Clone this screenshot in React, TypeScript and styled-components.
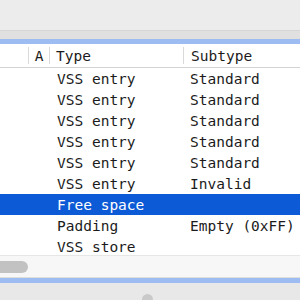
import React from "react";
import styled, { createGlobalStyle } from "styled-components";

const Global = createGlobalStyle`
  html, body { margin: 0; padding: 0; background: #ececec; }
  body { width: 300px; height: 300px; overflow: hidden; }
`;

const Window = styled.div`
  width: 300px;
  height: 300px;
  display: flex;
  flex-direction: column;
  background: #ececec;
  overflow: hidden;
  font-family: "DejaVu Sans Mono", "Liberation Mono", monospace;
  font-size: 14.5px;
  color: #1b1b1b;
`;

const Toolbar = styled.div`
  height: 30px;
  flex: none;
  background: #ececec;
  border-bottom: 1px solid #d6d6d6;
`;

const Gap = styled.div`
  height: 8px;
  flex: none;
  background: #e0e0e0;
`;

const ScrollView = styled.div`
  flex: none;
  display: flex;
  flex-direction: column;
  border-top: 5px solid #9dbdf2;
  border-bottom: 5px solid #9dbdf2;
  background: #ffffff;
`;

const cols = "28px 21px 134px 1fr";

const Header = styled.div`
  display: grid;
  grid-template-columns: ${cols};
  height: 23px;
  border-bottom: 1px solid #d3d3d3;
  background: #ffffff;
`;

const HeaderCell = styled.div<{ $pad?: number; $center?: boolean }>`
  display: flex;
  align-items: center;
  height: 100%;
  white-space: nowrap;
`;

const Sep = styled.div`
  width: 1px;
  height: 17px;
  background: #dadada;
  flex: none;
`;

const HeaderLabel = styled.span<{ $pad: number; $center?: boolean }>`
  padding-left: ${(p) => p.$pad}px;
  flex: ${(p) => (p.$center ? 1 : "none")};
  text-align: ${(p) => (p.$center ? "center" : "left")};
`;

const Body = styled.div`
  height: 187px;
  overflow: hidden;
  background: #ffffff;
`;

const Row = styled.div<{ $selected?: boolean }>`
  display: grid;
  grid-template-columns: ${cols};
  height: 21px;
  align-items: center;
  background: ${(p) => (p.$selected ? "#0d5ad6" : "#ffffff")};
  color: ${(p) => (p.$selected ? "#ffffff" : "#1b1b1b")};
  white-space: nowrap;
`;

const Cell = styled.div<{ $pad?: number }>`
  padding-left: ${(p) => p.$pad ?? 0}px;
  overflow: hidden;
`;

const HScroll = styled.div`
  height: 21px;
  flex: none;
  background: #f7f7f7;
  border-top: 1px solid #e6e6e6;
  border-bottom: 1px solid #dedede;
  display: flex;
  align-items: center;
  padding-left: 0;
`;

const Thumb = styled.div`
  width: 34px;
  height: 12px;
  margin-left: -6px;
  border-radius: 6px;
  background: #c2c2c2;
`;

const Footer = styled.div`
  flex: 1;
  background: #e8e8e8;
  display: flex;
  justify-content: center;
  padding-top: 11px;
  padding-left: 0;
`;

const Knob = styled.div`
  width: 11px;
  height: 11px;
  border-radius: 50%;
  background: #c9c9c9;
  margin-left: -6px;
`;

const rows: { type: string; sub: string; selected?: boolean }[] = [
  { type: "VSS entry", sub: "Standard" },
  { type: "VSS entry", sub: "Standard" },
  { type: "VSS entry", sub: "Standard" },
  { type: "VSS entry", sub: "Standard" },
  { type: "VSS entry", sub: "Standard" },
  { type: "VSS entry", sub: "Invalid" },
  { type: "Free space", sub: "", selected: true },
  { type: "Padding", sub: "Empty (0xFF)" },
  { type: "VSS store", sub: "" },
];

export default function App() {
  return (
    <Window>
      <Global />
      <Toolbar />
      <Gap />
      <ScrollView>
        <Header>
          <HeaderCell />
          <HeaderCell>
            <Sep />
            <HeaderLabel $pad={0} $center>A</HeaderLabel>
          </HeaderCell>
          <HeaderCell>
            <Sep />
            <HeaderLabel $pad={6}>Type</HeaderLabel>
          </HeaderCell>
          <HeaderCell>
            <Sep />
            <HeaderLabel $pad={7}>Subtype</HeaderLabel>
          </HeaderCell>
        </Header>
        <Body>
          {rows.map((r, i) => (
            <Row key={i} $selected={r.selected}>
              <Cell />
              <Cell />
              <Cell $pad={8}>{r.type}</Cell>
              <Cell $pad={7}>{r.sub}</Cell>
            </Row>
          ))}
        </Body>
        <HScroll>
          <Thumb />
        </HScroll>
      </ScrollView>
      <Footer>
        <Knob />
      </Footer>
    </Window>
  );
}
